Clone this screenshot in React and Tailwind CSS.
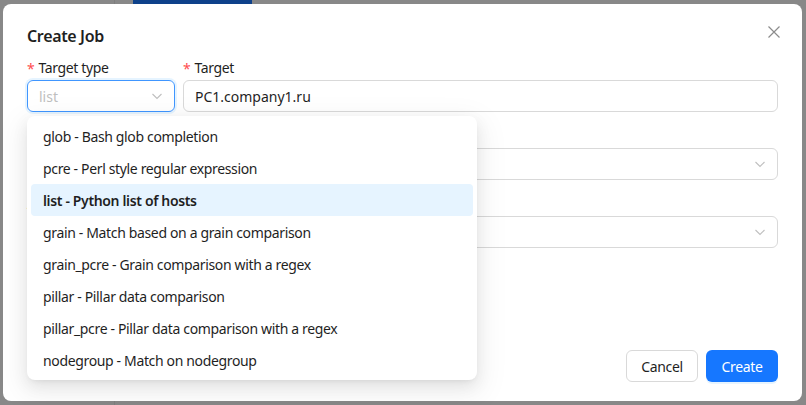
import React from 'react';

const targetTypes = [
  { id: 'glob', label: 'glob - Bash glob completion' },
  { id: 'pcre', label: 'pcre - Perl style regular expression' },
  { id: 'list', label: 'list - Python list of hosts' },
  { id: 'grain', label: 'grain - Match based on a grain comparison' },
  { id: 'grain_pcre', label: 'grain_pcre - Grain comparison with a regex' },
  { id: 'pillar', label: 'pillar - Pillar data comparison' },
  { id: 'pillar_pcre', label: 'pillar_pcre - Pillar data comparison with a regex' },
  { id: 'nodegroup', label: 'nodegroup - Match on nodegroup' },
];

const Chevron = ({ className }) => (
  <svg viewBox="0 0 12 12" className={className} fill="none" stroke="currentColor" strokeWidth="1.1">
    <path d="M1.5 4l4.5 4.5L10.5 4" />
  </svg>
);

const Label = ({ children, required }) => (
  <div className="h-[22px] mb-[2px] flex items-center text-[14px] text-[#1f1f1f] tracking-[-0.35px]">
    {required && <span className="text-[#ff4d4f] mr-1 text-[14px] leading-none pt-[3px]">*</span>}
    {children}
  </div>
);

const App = () => {
  const selected = 'list';

  return (
    <div
      className="relative w-[806px] h-[405px] bg-[#888888] overflow-hidden"
      style={{ fontFamily: '"Noto Sans", "Open Sans", sans-serif' }}
    >
      {/* page behind the overlay */}
      <div className="absolute top-0 left-[133px] w-[119px] h-[4px] bg-[#0e418a]" />
      <div className="absolute top-0 left-[114px] w-px h-[405px] bg-[#7e7e7e]" />

      {/* Modal */}
      <div className="absolute left-[3px] top-[4px] w-[799px] h-[397px] bg-white rounded-lg flex flex-col px-6 pt-5 pb-[19px]">
        <div className="flex items-center justify-between h-6 mb-2">
          <h2 className="text-[16px] font-semibold text-[#1f1f1f] leading-6 tracking-[-0.35px]">Create Job</h2>
          <button className="w-[22px] h-[22px] flex items-center justify-center text-[#8c8c8c] -mr-[7px] -mt-[8px]">
            <svg viewBox="0 0 14 14" className="w-[14px] h-[14px]" stroke="currentColor" strokeWidth="1.2">
              <path d="M1.5 1.5l11 11M12.5 1.5l-11 11" />
            </svg>
          </button>
        </div>

        {/* Row 1 */}
        <div className="flex gap-2 mb-3">
          <div className="w-[148px] shrink-0">
            <Label required>Target type</Label>
            <div className="h-8 rounded-md border border-[#4096ff] shadow-[0_0_0_2px_rgba(5,145,255,0.1)] flex items-center px-[11px] justify-between">
              <span className="text-[14px] text-[#bfbfbf]">list</span>
              <Chevron className="w-3 h-3 text-[#bfbfbf]" />
            </div>
          </div>
          <div className="flex-1">
            <Label required>Target</Label>
            <div className="h-8 rounded-md border border-[#d9d9d9] flex items-center px-[11px] text-[14px] text-[#1f1f1f]">
              PC1.company1.ru
            </div>
          </div>
        </div>

        {/* Row 2 */}
        <div className="mb-3">
          <Label required>Function</Label>
          <div className="h-8 rounded-md border border-[#d9d9d9] flex items-center justify-end px-[11px]">
            <Chevron className="w-3 h-3 text-[#bfbfbf]" />
          </div>
        </div>

        {/* Row 3 */}
        <div>
          <Label>Arguments</Label>
          <div className="h-8 rounded-md border border-[#d9d9d9] flex items-center justify-end px-[11px]">
            <Chevron className="w-3 h-3 text-[#bfbfbf]" />
          </div>
        </div>

        <div className="flex-1" />

        <div className="flex justify-end gap-2 tracking-[-0.35px]">
          <button className="h-8 w-[72px] rounded-md border border-[#d9d9d9] bg-white text-[14px] text-[#1f1f1f]">
            Cancel
          </button>
          <button className="h-8 w-[72px] rounded-md bg-[#1677ff] text-[14px] text-white shadow-[0_2px_0_rgba(5,145,255,0.1)]">
            Create
          </button>
        </div>
      </div>

      {/* Dropdown menu */}
      <div className="absolute left-[27px] top-[116px] w-[450px] bg-white rounded-lg p-1 shadow-[0_6px_16px_0_rgba(0,0,0,0.08),0_3px_6px_-4px_rgba(0,0,0,0.12),0_9px_28px_8px_rgba(0,0,0,0.05)]">
        {targetTypes.map((t) => {
          const isActive = t.id === selected;
          return (
            <div
              key={t.id}
              className={`h-8 flex items-center px-3 rounded text-[14px] text-[#1f1f1f] tracking-[-0.35px] ${
                isActive ? 'bg-[#e6f4ff] font-semibold' : ''
              }`}
            >
              {t.label}
            </div>
          );
        })}
      </div>
    </div>
  );
};

export default App;
